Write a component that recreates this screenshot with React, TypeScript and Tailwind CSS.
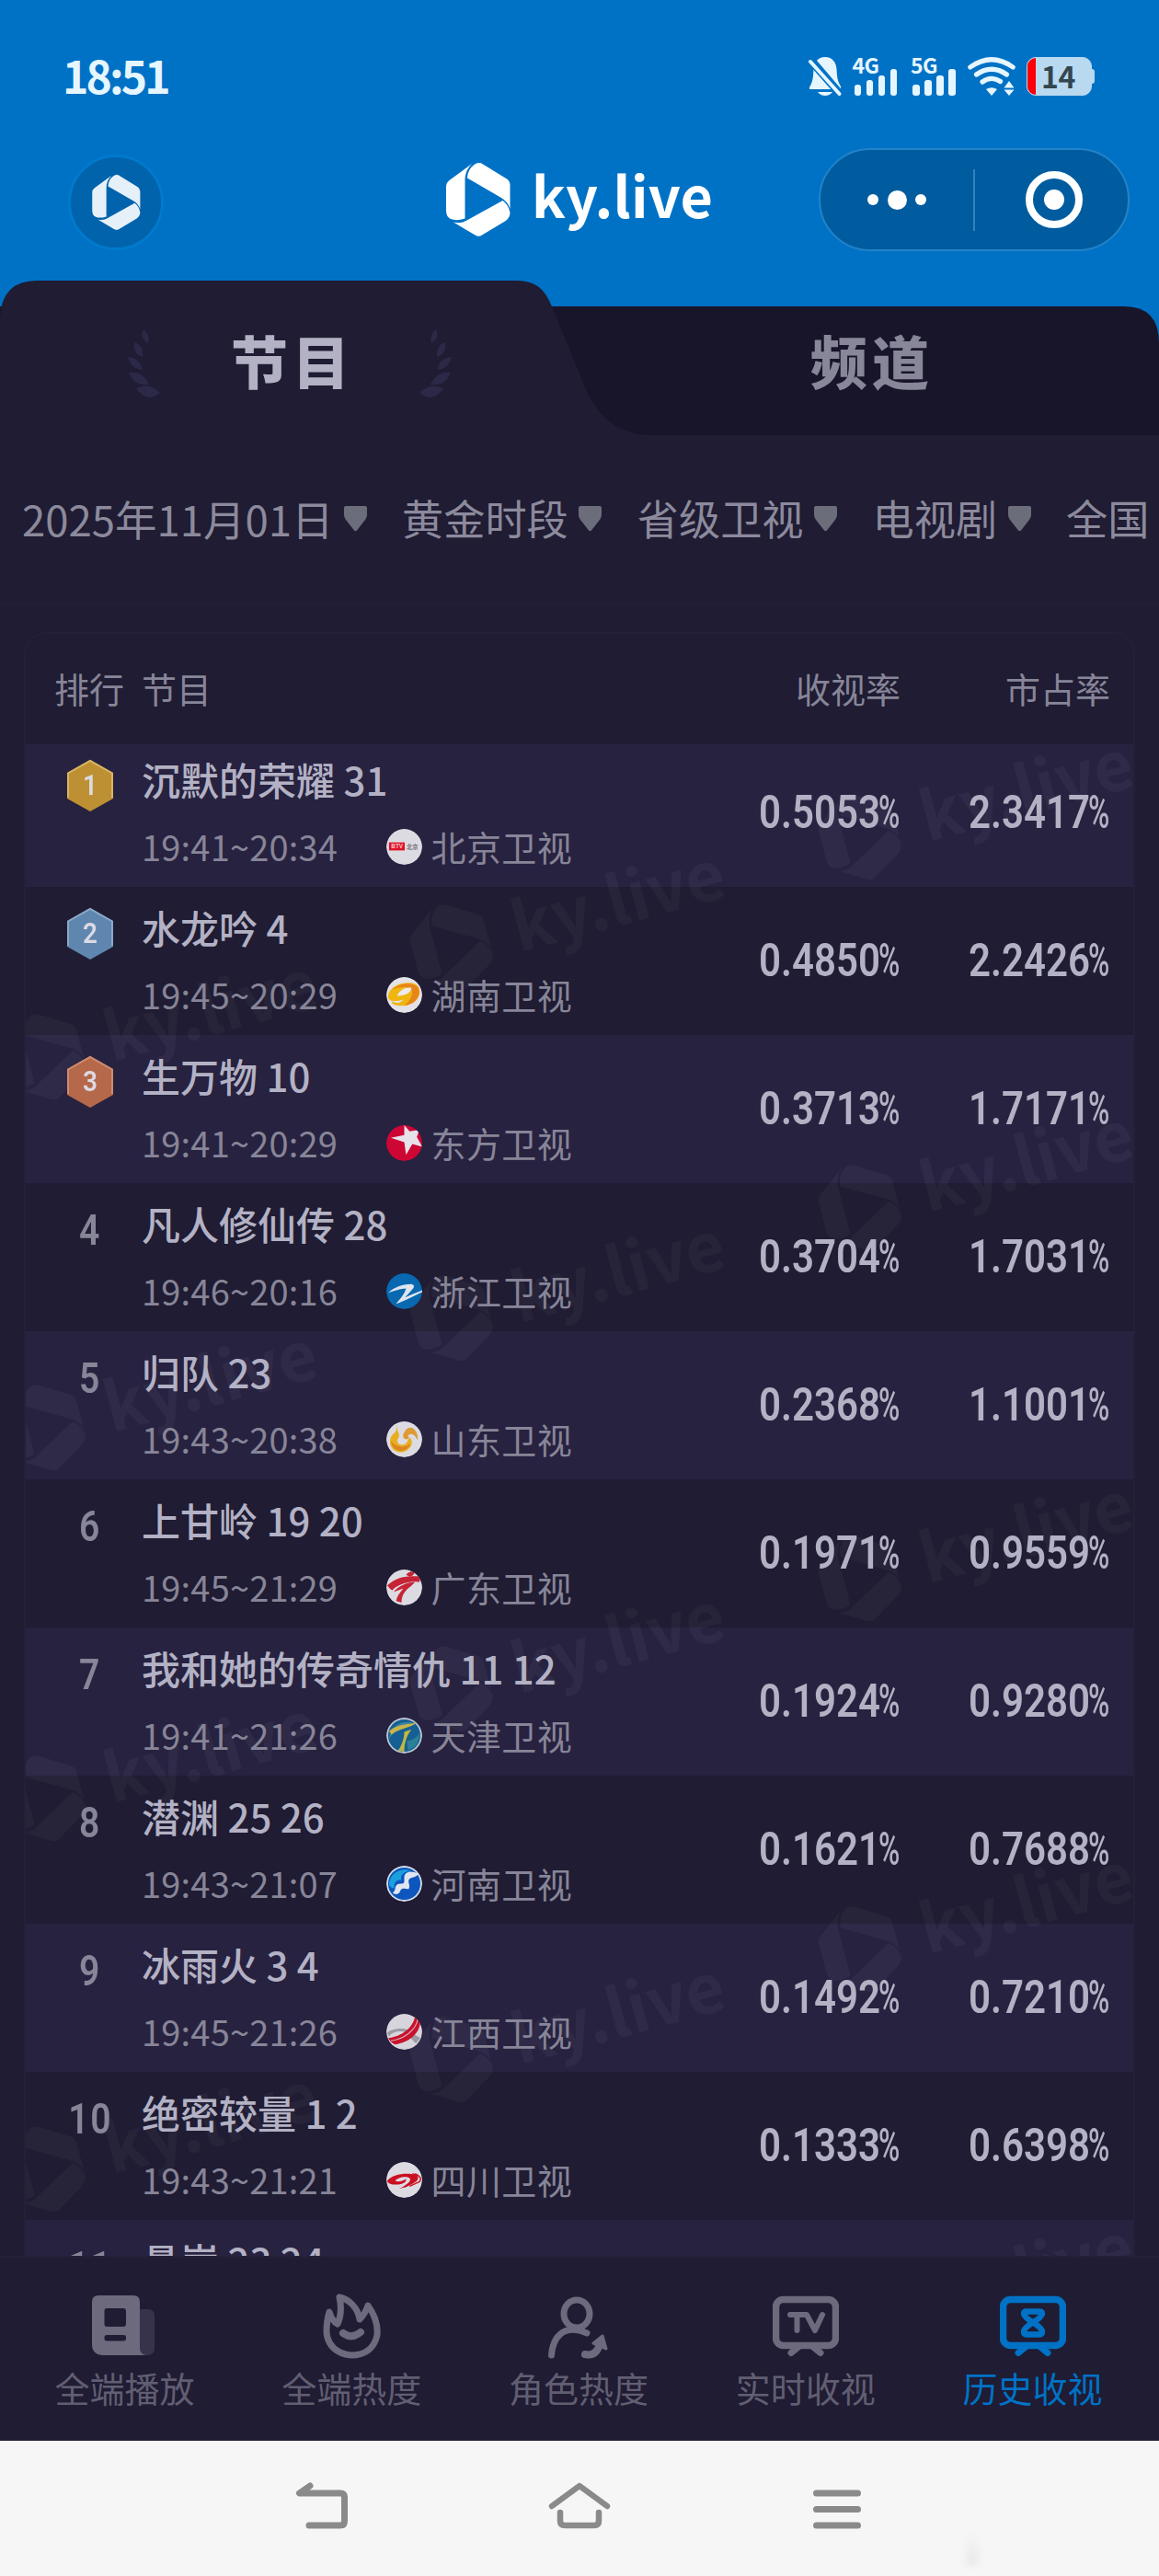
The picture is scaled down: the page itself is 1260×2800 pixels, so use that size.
import type { ReactNode } from "react";

const CJK = "font-['Noto_Sans_CJK_SC',sans-serif]";

function LogoMark({ className }: { className: string }) {
  return (
    <svg viewBox="0 0 70 80" className={className} fill="currentColor" aria-hidden>
      <path d="M0 26Q0 21.500 3.500 19L28 1Q20 9 20.500 20V60.500Q11 63.500 5 61Q0 58.500 0 52Z" />
      <path d="M30.500 2Q35.500 -1.500 40 1.500L66 17.500Q69.500 20 69.500 24V50Q67.500 42.500 60 38L23 16.500Q23.500 7 30.500 2Z" />
      <path d="M61.500 41Q67.500 45 69.500 54Q69.500 60 64 63.500L39 78.500Q35.500 81 31.500 78.500L8 64.500Q17 66.500 22.500 62.500Z" />
    </svg>
  );
}

function Brand() {
  return (
    <div className="flex items-center">
      <LogoMark className="h-[80px] w-[70px] shrink-0" />
      <span className="ml-[23px] -mt-[12px] text-[61px] leading-[80px] font-bold tracking-[0.2px] whitespace-nowrap">ky.live</span>
    </div>
  );
}

function Signal({ label }: { label: string }) {
  return (
    <div className="relative h-[42px] w-[50px]">
      <span className="absolute -top-[3px] -left-[2px] text-[23px] leading-[22px] font-bold tracking-[-0.5px]">{label}</span>
      <div className="flex h-full items-end gap-[5.5px]">
        <i className="h-[12px] w-[7.500px] rounded-[3px] bg-current" />
        <i className="h-[17px] w-[7.500px] rounded-[3px] bg-current" />
        <i className="h-[22px] w-[7.500px] rounded-[3px] bg-current" />
        <i className="h-[29px] w-[7.500px] rounded-[3px] bg-current" />
      </div>
    </div>
  );
}

function StatusBar() {
  return (
    <div className="flex h-[161px] shrink-0 items-center pt-[5px] pl-[68px] text-[#e6f6ff]">
      <span className="-mt-[5px] text-[48px] leading-[64px] font-bold tracking-[-2.8px]">18:51</span>
      <div className="mr-[70px] ml-auto flex items-center">
        <svg viewBox="0 0 36 42" className="h-[42px] w-[36px]" fill="currentColor">
          <path d="M18 0C26 0 30 6 30.500 13C31 22 31.500 26 35 32V35H1V33C5 26 5 22 5.500 13C6 6 10 0 18 0Z" />
          <path d="M10 38H26Q23 42 18 42T10 38Z" />
          <path d="M4 1L38 41" stroke="#0072c6" strokeWidth="4" />
          <path d="M2 5.500L33 40.500" stroke="#0072c6" strokeWidth="6" />
          <path d="M2 5L33.500 40" stroke="currentColor" strokeWidth="4" strokeLinecap="round" />
        </svg>
        <div className="ml-[14px]"><Signal label="4G" /></div>
        <div className="ml-[13.500px]"><Signal label="5G" /></div>
        <svg viewBox="0 0 53 42" className="ml-[10px] h-[42px] w-[53px]" fill="none" stroke="currentColor" strokeWidth="5.200" strokeLinecap="round">
          <path d="M2.800 11Q26 -5.500 49.200 11" />
          <path d="M9.500 19Q26 7.500 42.500 19" />
          <path d="M16 27Q26 20 35.500 26.500" />
          <path d="M20 35Q26 31.500 32 35L26 42Z" fill="currentColor" stroke="none" />
          <path d="M45 26L50.500 33.500H39.500ZM45 42L50.500 35.500H39.500Z" fill="currentColor" stroke="none" />
        </svg>
        <div className="ml-[11px] flex items-center">
          <div className="flex h-[42px] w-[71px] items-center overflow-hidden rounded-[10px] border border-[#b8d9ef] bg-[#b8d9ef]">
            <i className="h-full w-[9px] shrink-0 bg-[#fb0007]" />
            <span className="-mt-[3px] ml-[6px] text-[32px] leading-[42px] font-bold tracking-[-0.5px] text-[#33454f]">14</span>
          </div>
          <i className="h-[16px] w-[3px] rounded-r-[3px] bg-[#b8d9ef]" />
        </div>
      </div>
    </div>
  );
}

function Header() {
  return (
    <div className="flex h-[144px] shrink-0 items-start text-white">
      <div className="mt-[7px] ml-[74px] flex size-[104px] items-center justify-center rounded-full border-[3px] border-[#007acd] bg-[#0063ab] text-[#e6f0f9]">
        <LogoMark className="h-[60px] w-[53px]" />
      </div>
      <div className="mt-[16px] ml-[307px]"><Brand /></div>
      <div className="mr-[32px] ml-auto flex h-[112px] w-[338px] items-center rounded-full border-2 border-[#2383c8] bg-[#005c9f]">
        <div className="flex w-[166px] items-center justify-center gap-[9.500px]">
          <i className="size-[12px] rounded-full bg-white" />
          <i className="size-[21px] rounded-full bg-white" />
          <i className="size-[12px] rounded-full bg-white" />
        </div>
        <i className="h-[67px] w-[2px] bg-[#2f83c0]" />
        <div className="flex flex-1 items-center justify-center pl-[5px]">
          <div className="flex size-[62px] items-center justify-center rounded-full border-[8.500px] border-white">
            <i className="size-[22px] rounded-full bg-white" />
          </div>
        </div>
      </div>
    </div>
  );
}

function Laurel({ className }: { className: string }) {
  return (
    <svg viewBox="0 0 35 76" className={className} fill="#2c2948">
      <path d="M17 1Q25 8 22 16Q12 10 17 1Z" />
      <path d="M7 15Q17 18 16 31Q5 27 7 15Z" />
      <path d="M0 31Q13 32 16 45Q3 44 0 31Z" />
      <path d="M1 48Q16 46 23 61Q7 63 1 48Z" />
      <path d="M9 65Q23 58 35 70Q20 82 9 65Z" />
    </svg>
  );
}

function Tabs() {
  return (
    <div className="relative h-[168px] shrink-0">
      <svg viewBox="0 0 1260 168" className="absolute inset-0 h-[168px] w-[1260px]">
        <path d="M0 168V28H1222Q1260 28 1260 68V168Z" fill="#18152b" />
        <path d="M0 168V40Q2 0 40 0H562C586 0 594 14 600 28L632 106C645 143 668 168 708 168Z" fill="#1f1c33" />
      </svg>
      <div className="relative flex h-full pt-[11px] text-[62px] font-black tracking-[5px]">
        <div className="flex w-1/2 items-center justify-center text-[#b3b1c4]">
          <Laurel className="h-[76px] w-[35px]" />
          <span className="-mt-[7px] w-[282px] pl-[6px] text-center leading-[80px]">节目</span>
          <Laurel className="h-[76px] w-[35px] -scale-x-100" />
        </div>
        <div className="flex w-1/2 items-center justify-center pl-[6px] text-[#888699]">
          <span className="-mt-[7px] leading-[80px]">频道</span>
        </div>
      </div>
    </div>
  );
}

const filters = ["2025年11月01日", "黄金时段", "省级卫视", "电视剧", "全国"];

function Filters() {
  return (
    <div className="flex h-[186px] shrink-0 items-center gap-[38.500px] overflow-hidden border-b-4 border-[#221f38] pl-[24px]">
      {filters.map((f, i) => (
        <div key={f} className="flex shrink-0 items-center">
          <span className={i === 0 ? "-mt-[3px] mr-[11px] text-[45.500px] leading-[60px] text-[#8c8a9c]" : "-mt-[3px] mr-[11.500px] text-[45.200px] leading-[60px] text-[#8c8a9c]"}>{f}</span>
          <svg viewBox="0 0 25 28" className="h-[28px] w-[25px]">
            <path d="M2 0H23Q25 0 25 2V10Q24.500 13 23 15L14 26.500Q12.500 28 11 26.500L2 15Q0.500 13 0 10V2Q0 0 2 0Z" fill="#6c6d7b" />
          </svg>
        </div>
      ))}
    </div>
  );
}

const stations: Record<string, ReactNode> = {
  北京卫视: (
    <>
      <circle cx="20" cy="20" r="20" fill="#dddbe2" />
      <rect x="3" y="15" width="17.500" height="9" fill="#df1226" />
      <text x="5.500" y="22" fontSize="6.500" fontWeight="700" fill="#f3c9d0" fontFamily="Liberation Sans">BTV</text>
      <text x="22.500" y="22.200" fontSize="6.500" fontWeight="700" fill="#77757f">北京</text>
    </>
  ),
  湖南卫视: (
    <>
      <circle cx="20" cy="20" r="20" fill="#e4e2e6" />
      <path d="M2 22C3 9 20 5 30 7C40 10 39 22 31 28C22 34 5 33 6 27C11 30 16 29 19 25C9 28 2 27 2 22Z" fill="#efb610" />
      <path d="M7 14C15 6 29 6 35 11C40 20 33 30 20 32C26 27 31 19 28 13C22 10 13 11 7 14Z" fill="#e8851a" />
      <path d="M12 21C15 14 22 11 28 12C28 17 21 21 12 21Z" fill="#eceaf0" />
    </>
  ),
  东方卫视: (
    <>
      <circle cx="20" cy="20" r="20" fill="#cd0634" />
      <path d="M20 0L26 7L37 5L34 13L40 24L29 21L22 33L20 19L5 14L20 11Z" fill="#e7e2ea" />
    </>
  ),
  浙江卫视: (
    <>
      <circle cx="20" cy="20" r="20" fill="#0868b0" />
      <path d="M2 22C9 15 19 12 28 12C32 13 31 16 29 18L21 27C28 24 34 21 40 19V21C31 25 20 31 11 34C14 30 20 24 22 17C16 17 8 20 2 22Z" fill="#dfe4ee" />
    </>
  ),
  山东卫视: (
    <>
      <circle cx="20" cy="20" r="20" fill="#dddbe2" />
      <path d="M12 4C11 11 17 15 13 19C11 22 13 27 19 26C24 25 23 21 26 18C33 24 24 37 13 34C2 31 2 17 9 13C12 10 11 7 12 4Z" fill="#e8ae20" />
      <path d="M20 12C25 2 36 8 35 21C32 15 28 12 24 16C26 18 25 20 22 20C18 19 18 15 20 12Z" fill="#dd9a37" />
      <path d="M5 22C11 29 20 30 27 25C22 36 7 35 5 22Z" fill="#dc8420" />
    </>
  ),
  广东卫视: (
    <>
      <circle cx="20" cy="20" r="20" fill="#dddbe2" />
      <path d="M1 18C9 10 20 6 38 8L37 14C25 12 10 18 7 23C5 23 3 20 1 18Z" fill="#c62335" />
      <path d="M22 6Q26 1 32 3Q30 7 26 8Z" fill="#c62335" />
      <path d="M8 25C15 17 24 14 32 14L27 19C20 24 17 29 17 37L11 35C12 29 16 25 19 21C15 22 12 24 8 25Z" fill="#c62335" />
    </>
  ),
  天津卫视: (
    <>
      <circle cx="20" cy="20" r="20" fill="#b9c6cf" />
      <circle cx="20" cy="20" r="18" fill="#155f94" />
      <path d="M3 24C5 7 20 2 33 7C24 7 17 10 11 13C8 16 6 19 3 24Z" fill="#3d86a0" />
      <path d="M3 15C12 7 25 8 33 6C27 12 13 12 6 19Z" fill="#c9b44b" />
      <path d="M20 16L28 13C22 21 20 29 20 38L13 37C18 30 20 22 20 16Z" fill="#c3b742" />
      <path d="M23 26C29 26 34 22 37 17C37 29 31 35 24 36Z" fill="#2b8097" />
    </>
  ),
  河南卫视: (
    <>
      <circle cx="20" cy="20" r="20" fill="#d4dcea" />
      <circle cx="20" cy="20" r="18" fill="#0c56bd" />
      <path d="M3 20C4 8 16 2 27 5C18 7 15 12 17 16C12 15 8 18 9 25C5 25 3 22 3 20Z" fill="#1ba0dd" />
      <path d="M20 12C22 5 29 6 36 9C33 14 27 12 25 16C24 19 27 22 25 26C20 26 19 24 16 27C15 32 10 33 7 30C11 28 9 23 12 21C15 19 20 22 20 17Z" fill="#dfe6f2" />
    </>
  ),
  江西卫视: (
    <>
      <circle cx="20" cy="20" r="20" fill="#d7d5db" />
      <path d="M1 21C6 16 18 15 26 18L23 21C14 18 7 20 3 25ZM28 21L38 27L33 33L27 27Z" fill="#9c9aa4" />
      <path d="M32 2C30 16 17 25 2 27C4 31 7 33 10 34C25 32 37 22 38 9Z" fill="#c8122c" />
      <path d="M35 6C33 18 20 28 5 30" fill="none" stroke="#dca8b4" strokeWidth="1.200" />
    </>
  ),
  四川卫视: (
    <>
      <circle cx="20" cy="20" r="20" fill="#dddbe2" />
      <path d="M1 21C6 13 26 11 33 15C38 20 29 26 14 30C22 26 29 21 26 18C21 15 12 18 10 21C14 23 18 21 22 19C23 24 14 26 7 25C3 24 1 23 1 21Z" fill="#cb1022" />
      <path d="M29 13Q38 16 33 21L20 28M32 13Q41 17 37 22L26 27" fill="none" stroke="#cb1022" strokeWidth="1.400" />
    </>
  ),
};

interface Show {
  title: string;
  time: string;
  station: string;
  rating: string;
  share: string;
}

const shows: Show[] = [
  { title: "沉默的荣耀 31", time: "19:41~20:34", station: "北京卫视", rating: "0.5053", share: "2.3417" },
  { title: "水龙吟 4", time: "19:45~20:29", station: "湖南卫视", rating: "0.4850", share: "2.2426" },
  { title: "生万物 10", time: "19:41~20:29", station: "东方卫视", rating: "0.3713", share: "1.7171" },
  { title: "凡人修仙传 28", time: "19:46~20:16", station: "浙江卫视", rating: "0.3704", share: "1.7031" },
  { title: "归队 23", time: "19:43~20:38", station: "山东卫视", rating: "0.2368", share: "1.1001" },
  { title: "上甘岭 19 20", time: "19:45~21:29", station: "广东卫视", rating: "0.1971", share: "0.9559" },
  { title: "我和她的传奇情仇 11 12", time: "19:41~21:26", station: "天津卫视", rating: "0.1924", share: "0.9280" },
  { title: "潜渊 25 26", time: "19:43~21:07", station: "河南卫视", rating: "0.1621", share: "0.7688" },
  { title: "冰雨火 3 4", time: "19:45~21:26", station: "江西卫视", rating: "0.1492", share: "0.7210" },
  { title: "绝密较量 1 2", time: "19:43~21:21", station: "四川卫视", rating: "0.1333", share: "0.6398" },
];

const medals = [
  { fill: "#bd9033", edge: "#d8b565" },
  { fill: "#5f86ae", edge: "#8aa9c8" },
  { fill: "#b5694a", edge: "#cf8c6f" },
];

function Rank({ n }: { n: number }) {
  if (n > 3) {
    return <span className="inline-block scale-x-[0.85] font-['Roboto',sans-serif] text-[46px] leading-none font-semibold tracking-[2px] text-[#878598]">{n}</span>;
  }
  const m = medals[n - 1];
  return (
    <div className="relative flex h-[58px] w-[52px] items-center justify-center">
      <svg viewBox="0 0 52 58" className="absolute inset-0 h-[58px] w-[52px]">
        <path d="M26 1L51 15V43L26 57L1 43V15Z" fill={m.fill} />
        <path d="M2 42V15.500L26 2L50 15.500V42" fill="none" stroke={m.edge} strokeWidth="2" />
      </svg>
      <span className="relative inline-block scale-x-90 font-['Roboto',sans-serif] text-[31px] leading-none font-semibold text-[#dcdae4]">{n}</span>
    </div>
  );
}

function Percent({ value }: { value: string }) {
  return (
    <div className="flex w-[228px] items-center justify-end font-['Roboto',sans-serif] text-[49.500px] leading-none font-semibold text-[#b3b1c4]">
      <span className="w-[130px] whitespace-nowrap">
        <span className="inline-block origin-left scale-x-[0.850]">{value}</span>
      </span>
      <span className="w-[24px]">
        <span className="inline-block origin-left scale-x-[0.640] font-medium">%</span>
      </span>
    </div>
  );
}

function Row({ show, n }: { show: Show; n: number }) {
  return (
    <div className={n % 2 ? "flex h-[161px] shrink-0 bg-[#272240]" : "flex h-[161px] shrink-0 bg-[#1f1c33]"}>
      <div className="relative z-10 flex h-[101px] w-[126px] shrink-0 items-center justify-center pl-[14px]">
        <Rank n={n} />
      </div>
      <div className="relative z-10 flex flex-1 flex-col pt-[14px]">
        <div className="flex h-[60px] items-center text-[42px] font-medium text-[#b3b1c4]">
          <span className="leading-none whitespace-nowrap">{show.title}</span>
        </div>
        <div className="mt-[18px] flex h-[50px] items-center text-[38px] text-[#878598]">
          <span className="w-[266px] shrink-0 leading-none tracking-[0.2px]">{show.time}</span>
          <svg viewBox="0 0 40 40" className="size-[39px] shrink-0 rounded-full">{stations[show.station]}</svg>
          <span className="ml-[9.500px] leading-none tracking-[0.400px] whitespace-nowrap">{show.station}</span>
        </div>
      </div>
      <div className="relative z-10 flex items-center pr-[25px]">
        <Percent value={show.rating} />
        <Percent value={show.share} />
      </div>
    </div>
  );
}

/* Centres of the tiled brand marks, relative to the first row. */
const marks = [0, 1, 2, 3, 4].flatMap((k) => [
  { x: 20, y: 340 + k * 403 },
  { x: 463, y: 221 + k * 403 },
  { x: 907, y: 101 + k * 403 },
]);

function Watermarks() {
  return (
    <div className="pointer-events-none absolute inset-0 overflow-hidden">
      {marks.map((m) => (
        <div
          key={`${m.x}-${m.y}`}
          className="absolute origin-[35px_40px] scale-[1.200] -rotate-15 text-white opacity-[0.035]"
          style={{ left: m.x - 35, top: m.y - 40 }}
        >
          <Brand />
        </div>
      ))}
    </div>
  );
}

function Ranking() {
  return (
    <div className="mx-[26px] mt-[28px] flex min-h-0 flex-1 flex-col overflow-hidden rounded-t-[24px] border-2 border-b-0 border-[#232038]">
      <div className="relative z-20 flex h-[120px] shrink-0 items-center bg-[#1f1c33] pr-[25px] pb-[2px] pl-[31px] text-[38px] leading-none text-[#878598]">
        <span className="w-[95px]">排行</span>
        <span className="flex-1">节目</span>
        <span>收视率</span>
        <span className="w-[228px] text-right">市占率</span>
      </div>
      <div className="relative flex min-h-0 flex-1 flex-col overflow-hidden">
        <div className="-mt-[6px] flex flex-col">
          {shows.map((s, i) => (
            <Row key={s.title} show={s} n={i + 1} />
          ))}
          <div className="flex h-[161px] shrink-0 bg-[#272240]">
            <div className="flex h-[101px] w-[126px] items-center justify-center pl-[14px]"><Rank n={11} /></div>
            <div className="mt-[14px] flex h-[60px] items-center text-[42px] leading-none font-medium text-[#b3b1c4]">悬崖 23 24</div>
          </div>
        </div>
        <Watermarks />
      </div>
    </div>
  );
}

function PlayIcon() {
  return (
    <svg viewBox="0 0 72 72" className="size-[72px]">
      <path d="M50 18H62Q69 18 69 26V60Q69 68 61 68H50Z" fill="#37334d" />
      <path d="M8 3H46Q53 3 53 10V60Q53 67 60 68H12Q1 67 1 56V10Q1 3 8 3ZM17 17Q14.500 17 14.500 20V34Q14.500 37 17 37H35Q38 37 38 34V20Q38 17 35 17ZM17 46Q14.500 46 14.500 48V50Q14.500 52.500 17 52.500H35Q38 52.500 38 50V48Q38 46 35 46Z" fill="#6d6a7e" fillRule="evenodd" />
    </svg>
  );
}

function FlameIcon() {
  return (
    <svg viewBox="0 0 72 72" className="size-[72px]" fill="none" stroke="#6d6a7e" strokeWidth="7" strokeLinecap="round" strokeLinejoin="round">
      <path d="M23 5C34 7 43 17 45 29C49 25 52 20 54 14C62 25 65 35 64 46C61 61 50 68 36 68C20 67 10 57 9 43C9 34 10 27 12 21C14 28 17 32 21 34C25 25 25 14 23 5Z" />
      <path d="M27 44Q36 51 46 43" strokeWidth="8" />
    </svg>
  );
}

function PersonIcon() {
  return (
    <svg viewBox="0 0 72 72" className="size-[72px]" fill="none" stroke="#6d6a7e" strokeWidth="7" strokeLinecap="round">
      <ellipse cx="34" cy="23" rx="14" ry="15" />
      <path d="M6.500 68C8 49 19 33 45 44" />
      <path d="M43 67Q55 70 59 56" strokeWidth="8" />
      <path d="M62 47L52 55L66 61Z" fill="#6d6a7e" strokeWidth="3" strokeLinejoin="round" />
    </svg>
  );
}

function TvIcon({ active }: { active?: boolean }) {
  const color = active ? "#0072c6" : "#6d6a7e";
  return (
    <svg viewBox="0 0 72 72" className="size-[72px]" fill="none" stroke={color} strokeLinecap="round" strokeLinejoin="round">
      <rect x="3.500" y="7.500" width="65" height="50" rx="8" strokeWidth="7.500" />
      <path d="M28 59L20 65.500M44 59L52 65.500" strokeWidth="7" />
      {active ? (
        <path d="M29 20.500H43Q46 20.500 46 23Q45 27 36 32.500Q27 38 26 42Q26 45.500 29 45.500H43Q46 45.500 46 42Q45 38 36 32.500Q27 27 26 23Q26 20.500 29 20.500Z" strokeWidth="6.500" />
      ) : (
        <path d="M19 24H37L46 41L54 24M26.500 24V41" strokeWidth="6" />
      )}
    </svg>
  );
}

const nav = [
  { label: "全端播放", icon: <PlayIcon /> },
  { label: "全端热度", icon: <FlameIcon /> },
  { label: "角色热度", icon: <PersonIcon /> },
  { label: "实时收视", icon: <TvIcon /> },
  { label: "历史收视", icon: <TvIcon active />, active: true },
];

function BottomNav() {
  return (
    <div className="relative z-20 flex h-[201px] shrink-0 border-t-2 border-[#232038] bg-[#1f1c33] pt-[38px] pr-[14px] pl-[12px]">
      {nav.map((item) => (
        <div key={item.label} className={item.active ? "flex flex-1 flex-col items-center text-[#0072c6]" : "flex flex-1 flex-col items-center text-[#615e72]"}>
          {item.icon}
          <span className="mt-[12px] text-[38px] leading-none">{item.label}</span>
        </div>
      ))}
    </div>
  );
}

function SystemNav() {
  return (
    <div className="relative flex h-[147px] shrink-0 items-center bg-[#f6f6f6] pb-[5px] pl-[314px]">
      <svg viewBox="0 0 72 56" className="h-[56px] w-[72px]" fill="none" stroke="#8a8a8a" strokeWidth="7" strokeLinecap="round" strokeLinejoin="round">
        <path d="M23 6L11.500 14H56Q60.500 14 60.500 18.500V44.500Q60.500 49 56 49H22" />
      </svg>
      <svg viewBox="0 0 72 56" className="ml-[208px] h-[56px] w-[72px]" fill="none" stroke="#8a8a8a" strokeWidth="6.500" strokeLinecap="round" strokeLinejoin="round">
        <path d="M6 28L36 6L66 28M15 35V44Q15 49 20 49H52Q57 49 57 44V35" />
      </svg>
      <svg viewBox="0 0 72 56" className="ml-[208px] h-[56px] w-[72px]" fill="none" stroke="#8a8a8a" strokeWidth="7" strokeLinecap="round">
        <path d="M13.500 14H58.500M13.500 31.500H58.500M13.500 49H58.500" />
      </svg>
      <i className="absolute right-[196px] bottom-[12px] h-[34px] w-[14px] bg-linear-to-b from-transparent to-[#e8e8e8] blur-[3px]" />
    </div>
  );
}

export default function App() {
  return (
    <div lang="zh-CN" className={`flex h-[2800px] w-[1260px] flex-col overflow-hidden bg-[#1f1c33] ${CJK}`}>
      <div className="flex shrink-0 flex-col bg-[#0072c6]">
        <StatusBar />
        <Header />
        <Tabs />
      </div>
      <Filters />
      <Ranking />
      <BottomNav />
      <SystemNav />
    </div>
  );
}
